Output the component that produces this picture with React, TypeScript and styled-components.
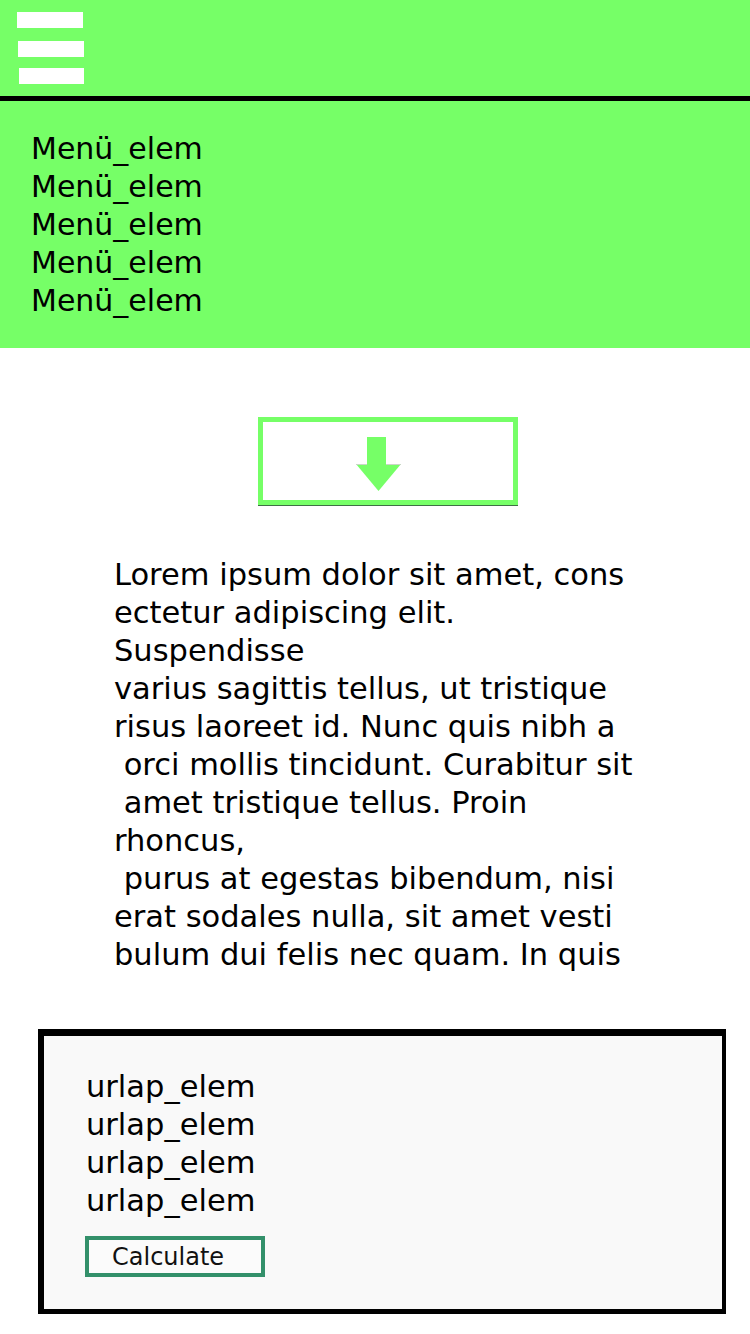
import React from "react";
import styled, { createGlobalStyle } from "styled-components";

const GREEN = "#76ff67";

const Global = createGlobalStyle`
  html, body { margin: 0; padding: 0; background: #ffffff; }
  body { font-family: "DejaVu Sans", "Noto Sans", sans-serif; color: #000; }
`;

const Page = styled.div`
  width: 750px;
  display: flex;
  flex-direction: column;
`;

const TopBar = styled.header`
  height: 96px;
  background: ${GREEN};
  border-bottom: 5px solid #000;
  display: flex;
  align-items: flex-start;
`;

const MenuPanel = styled.nav`
  background: ${GREEN};
  padding: 29px 0 28px 31px;
  display: flex;
  flex-direction: column;
`;

const MenuItem = styled.div`
  font-size: 30px;
  line-height: 38px;
  color: #000;
`;

const DownWrap = styled.div`
  display: flex;
  justify-content: center;
  padding-top: 69px;
  padding-left: 26px;
`;

const DownButton = styled.button`
  width: 260px;
  height: 88px;
  box-sizing: border-box;
  border: 5px solid ${GREEN};
  background: #fff;
  box-shadow: 0 1px 0 #3f6f45;
  padding: 0;
  display: flex;
  align-items: center;
  justify-content: center;
`;

const ArrowIcon = styled.svg`
  margin-right: 19px;
  margin-top: 6px;
  display: block;
`;

const Lorem = styled.p`
  margin: 51px 0 0 114px;
  font-size: 30.5px;
  line-height: 38px;
  white-space: pre;
`;

const FormBox = styled.form`
  margin: 55px 0 21px 38px;
  width: 688px;
  box-sizing: border-box;
  background: #f9f9f9;
  border-style: solid;
  border-color: #000;
  border-width: 7px 4px 5px 6px;
  padding: 32px 0 32px 41px;
  display: flex;
  flex-direction: column;
  align-items: flex-start;
`;

const FormItem = styled.div`
  font-size: 30.5px;
  line-height: 38px;
  padding-left: 1px;
`;

const CalcButton = styled.button`
  margin-top: 16px;
  width: 180px;
  height: 41px;
  box-sizing: border-box;
  border: 4px solid #33906a;
  background: #fbfbfb;
  font-family: "DejaVu Sans", sans-serif;
  font-size: 24px;
  color: #111;
  text-align: left;
  padding: 0 0 0 23px;
  line-height: 30px;
`;

const loremText = [
  "Lorem ipsum dolor sit amet, cons",
  "ectetur adipiscing elit.",
  "Suspendisse",
  "varius sagittis tellus, ut tristique",
  "risus laoreet id. Nunc quis nibh a",
  " orci mollis tincidunt. Curabitur sit",
  " amet tristique tellus. Proin",
  "rhoncus,",
  " purus at egestas bibendum, nisi",
  "erat sodales nulla, sit amet vesti",
  "bulum dui felis nec quam. In quis",
].join("\n");

export default function App() {
  return (
    <Page>
      <Global />
      <TopBar>
        <svg width="100" height="96" viewBox="0 0 100 96">
          <rect x="17" y="12" width="66" height="16" fill="#fff" />
          <rect x="18" y="41" width="66" height="16" fill="#fff" />
          <rect x="19" y="68" width="65" height="16" fill="#fff" />
        </svg>
      </TopBar>
      <MenuPanel>
        {Array.from({ length: 5 }).map((_, i) => (
          <MenuItem key={i}>Menü_elem</MenuItem>
        ))}
      </MenuPanel>
      <DownWrap>
        <DownButton type="button">
          <ArrowIcon width="45" height="54" viewBox="0 0 45 54">
            <rect x="11" y="0" width="19" height="28" fill={GREEN} />
            <polygon points="0,27 45,27 22.5,54" fill={GREEN} />
            <line x1="0" y1="27.5" x2="11" y2="27.5" stroke="#c9d6c6" strokeWidth="1" />
            <line x1="30" y1="27.5" x2="45" y2="27.5" stroke="#c9d6c6" strokeWidth="1" />
          </ArrowIcon>
        </DownButton>
      </DownWrap>
      <Lorem>{loremText}</Lorem>
      <FormBox onSubmit={(e) => e.preventDefault()}>
        {Array.from({ length: 4 }).map((_, i) => (
          <FormItem key={i}>urlap_elem</FormItem>
        ))}
        <CalcButton type="button">Calculate</CalcButton>
      </FormBox>
    </Page>
  );
}
